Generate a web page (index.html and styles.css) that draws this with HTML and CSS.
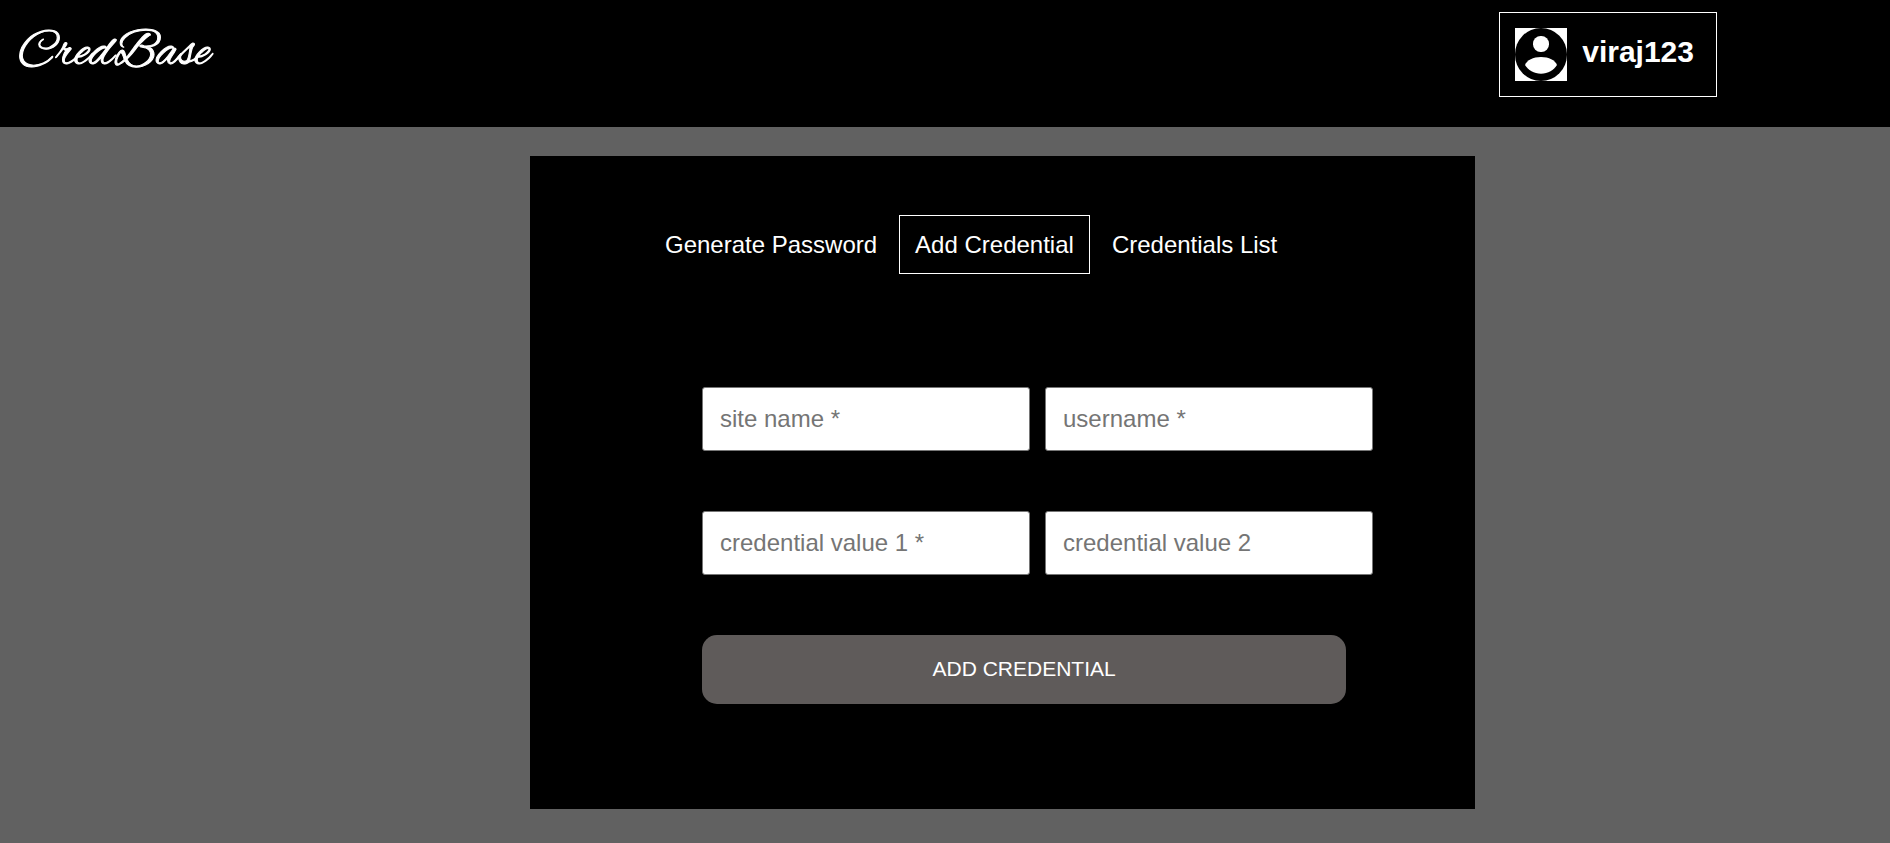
FILE: index.html
```html
<!DOCTYPE html>
<html lang="en">
<head>
  <meta charset="utf-8">
  <meta name="viewport" content="width=device-width, initial-scale=1">
  <title>CredBase</title>
  <link rel="stylesheet" href="styles.css">
</head>
<body>
  <header class="header">
    <a class="logo" href="#">CredBase</a>
    <button class="user" type="button">
      <svg class="user-icon" viewBox="0 0 52 53" aria-hidden="true">
        <rect width="52" height="53" fill="#fff"/>
        <ellipse cx="26" cy="26.5" rx="26" ry="26.5" fill="#000"/>
        <rect x="18" y="8" width="16" height="16" rx="7.6" fill="#fff"/>
        <path d="M10 37C12 32 18 29 26 29s14 3 16 8c-3 5-9 8.700-16 8.700S13 42 10 37Z" fill="#fff"/>
      </svg>
      <span>viraj123</span>
    </button>
  </header>
  <main class="panel">
    <nav class="tabs">
      <a class="tab" href="#">Generate Password</a>
      <a class="tab tab-active" href="#" aria-current="page">Add Credential</a>
      <a class="tab" href="#">Credentials List</a>
    </nav>
    <form class="form">
      <input class="field" type="text" placeholder="site name *" aria-label="site name" required>
      <input class="field" type="text" placeholder="username *" aria-label="username" required>
      <input class="field" type="text" placeholder="credential value 1 *" aria-label="credential value 1" required>
      <input class="field" type="text" placeholder="credential value 2" aria-label="credential value 2">
      <button class="submit" type="submit">ADD CREDENTIAL</button>
    </form>
  </main>
</body>
</html>
```
FILE: styles.css
```css
* {
  box-sizing: border-box;
}

body {
  margin: 0;
  background: #616161;
  color: #fff;
  font-family: "Liberation Sans", Arial, sans-serif;
}

.header {
  display: flex;
  justify-content: space-between;
  align-items: flex-start;
  padding: 12px 173px 30px 18px;
  background: #000;
}

.logo {
  padding-top: 12px;
  color: #fff;
  font: 52px/60px "Alex Brush", "Liberation Serif", cursive;
  -webkit-text-stroke: 1px #fff;
  text-decoration: none;
}

.user {
  display: flex;
  align-items: center;
  gap: 15px;
  padding: 15px 22px 15px 15px;
  border: 1px solid #fff;
  background: #000;
  color: #fff;
  font: bold 30px/34px "Liberation Sans", Arial, sans-serif;
}

.user span {
  padding-bottom: 5px;
}

.user-icon {
  display: block;
  width: 52px;
  height: 53px;
}

.panel {
  width: 50%;
  margin: 29px 415px 34px auto;
  padding: 59px 102px 105px 119px;
  background: #000;
}

.tabs {
  display: flex;
  gap: 6px;
}

.tab {
  padding: 15px;
  border: 1px solid transparent;
  color: #fff;
  font-size: 24px;
  line-height: 27px;
  text-decoration: none;
  white-space: nowrap;
}

.tab-active {
  border-color: #fff;
}

.form {
  display: grid;
  grid-template-columns: 1fr 1fr;
  gap: 60px 15px;
  margin: 113px 0 0 53px;
}

.field {
  min-width: 0;
  height: 64px;
  padding: 17px;
  border: 1px solid #767676;
  border-radius: 3px;
  background: #fff;
  color: #000;
  font: 24px "Liberation Sans", Arial, sans-serif;
}

.field::placeholder {
  color: #757575;
}

.submit {
  grid-column: 1 / -1;
  width: 96%;
  padding: 22px 15px 23px;
  border: 0;
  border-radius: 15px;
  background: #5f5b5a;
  color: #fff;
  font: 21px/24px "Liberation Sans", Arial, sans-serif;
}
```
